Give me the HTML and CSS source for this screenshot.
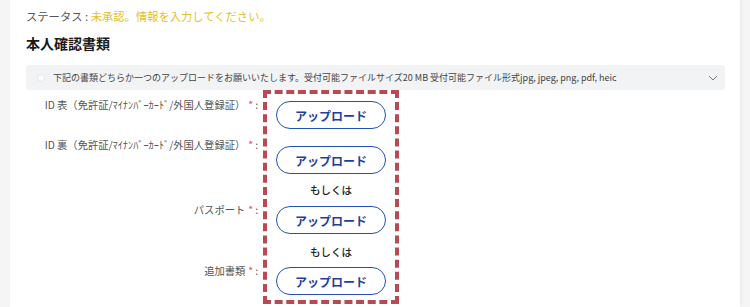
FILE: index.html
```html
<!DOCTYPE html>
<html lang="ja">
<head>
    <meta charset="UTF-8">
    <meta name="viewport" content="width=device-width, initial-scale=1.0">
    <title>本人確認書類</title>
    <link rel="stylesheet" href="styles.css">
</head>
<body>
    <div class="card">
        <p class="status">ステータス : <span class="status-value">未承認。情報を入力してください。</span></p>
        <h2 class="title">本人確認書類</h2>

        <div class="notice">
            <span class="notice-icon"></span>
            <p class="notice-text">下記の書類どちらか一つのアップロードをお願いいたします。受付可能ファイルサイズ20 MB 受付可能ファイル形式jpg, jpeg, png, pdf, heic</p>
            <svg class="chevron" width="10" height="6" viewBox="0 0 10 6">
                <path d="M1 1 L5 5 L9 1" fill="none" stroke="#777" stroke-width="1"/>
            </svg>
        </div>

        <div class="upload-form">
            <div class="labels">
                <label class="label row-1">ID 表（免許証/ﾏｲﾅﾝﾊﾞｰｶｰﾄﾞ/外国人登録証）<span class="req">*</span>:</label>
                <label class="label row-2">ID 裏（免許証/ﾏｲﾅﾝﾊﾞｰｶｰﾄﾞ/外国人登録証）<span class="req">*</span>:</label>
                <label class="label row-3">パスポート<span class="req">*</span>:</label>
                <label class="label row-4">追加書類<span class="req">*</span>:</label>
            </div>

            <div class="upload-box">
                <button class="upload-btn btn-1">アップロード</button>
                <button class="upload-btn btn-2">アップロード</button>
                <p class="or">もしくは</p>
                <button class="upload-btn btn-3">アップロード</button>
                <p class="or or-2">もしくは</p>
                <button class="upload-btn btn-4">アップロード</button>
            </div>
        </div>
    </div>
</body>
</html>
```

FILE: styles.css
```css
body {
    margin: 0;
    background-color: #f5f5f5;
    font-family: "Noto Sans CJK JP", "Noto Sans", sans-serif;
    color: #333;
}

.card {
    margin-left: 10px;
    width: 730px;
    height: 307px;
    box-sizing: border-box;
    padding-left: 16px;
    background-color: #fff;
    box-shadow: 1px 0 4px rgba(0, 0, 0, 0.06);
    overflow: hidden;
}

.status {
    margin: 0;
    padding-top: 8px;
    font-size: 11.3px;
    line-height: 16px;
    color: #555;
}

.status-value {
    color: #e3bf2a;
}

.title {
    margin: 9px 0 0;
    font-size: 14px;
    line-height: 20px;
    font-weight: bold;
    color: #1a1a1a;
}

.notice {
    display: flex;
    align-items: center;
    margin-top: 12px;
    width: 699px;
    height: 25px;
    box-sizing: border-box;
    padding: 0 7px 0 11px;
    background-color: #f2f3f5;
    border-radius: 3px;
}

.notice-icon {
    width: 8px;
    height: 8px;
    border-radius: 50%;
    background-color: #fcfcfc;
    border: 1px solid #e6e6e8;
    box-sizing: border-box;
}

.notice-text {
    flex: 1;
    margin: 0 0 0 8px;
    font-size: 9px;
    color: #444;
    white-space: nowrap;
}

.upload-form {
    display: flex;
}

.labels {
    display: flex;
    flex-direction: column;
    align-items: flex-end;
    width: 237px;
    padding-right: 5px;
    box-sizing: border-box;
}

.label {
    font-size: 10.3px;
    line-height: 14px;
    color: #555;
    white-space: nowrap;
}

.req {
    color: #e5484d;
    margin: 0 2px 0 3px;
}

.row-1 { margin-top: 8px; }
.row-2 { margin-top: 26px; }
.row-3 { margin-top: 51px; }
.row-4 { margin-top: 47px; }

.upload-box {
    display: flex;
    flex-direction: column;
    align-items: center;
    width: 136px;
    height: 214px;
    box-sizing: border-box;
    padding-top: 7px;
    border: 4px dashed #b94a51;
}

.upload-btn {
    width: 110px;
    height: 28px;
    border: 1.5px solid #2150b0;
    border-radius: 14px;
    background-color: #fff;
    color: #1d3f9e;
    font-family: inherit;
    font-size: 12px;
    font-weight: bold;
    cursor: pointer;
}

.btn-2 { margin-top: 17px; }
.btn-3 { margin-top: 8px; }
.btn-4 { margin-top: 7px; }

.or {
    margin: 8px 0 0;
    font-size: 10.5px;
    line-height: 16px;
    font-weight: 500;
    color: #222;
}

.or-2 {
    margin-top: 10px;
}
```
